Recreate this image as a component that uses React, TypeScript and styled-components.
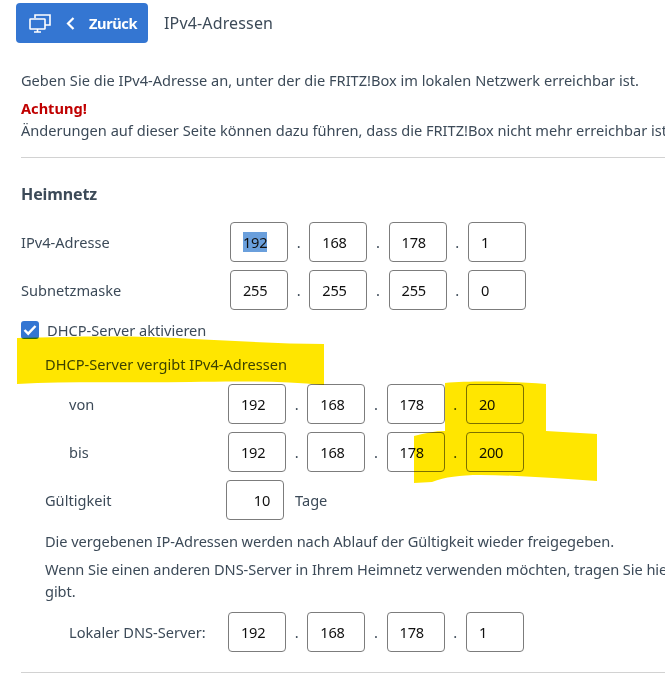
import React from "react";
import styled, { createGlobalStyle } from "styled-components";

const Global = createGlobalStyle`
  html, body { margin: 0; padding: 0; background: #fff; overflow: hidden; height: 688px; }
  body { font-family: "Noto Sans", "Liberation Sans", sans-serif; color: #3c4a58; }
`;

const Page = styled.div`
  position: relative;
  width: 665px;
  height: 688px;
  overflow: hidden;
  font-size: 14.6px;
`;
const Header = styled.header`
  display: flex;
  align-items: center;
  gap: 16px;
  padding: 3px 0 0 16px;
  height: 40px;
`;
const BackButton = styled.div`
  display: flex;
  align-items: center;
  width: 132px;
  height: 40px;
  box-sizing: border-box;
  padding-left: 13px;
  background: #3476d2;
  border-radius: 4px;
  color: #fff;
  font-weight: 700;
  font-size: 14.6px;
  letter-spacing: -0.4px;
`;
const BackLabel = styled.span`
  margin-left: 14px;
`;
const Chevron = styled.svg`
  margin-left: 15px;
`;
const Title = styled.div`
  font-size: 16px;
  letter-spacing: 0.15px;
`;
const Content = styled.main`
  width: 900px;
  padding: 26px 0 0 21px;
`;
const Para = styled.p<{ $top?: number; $tight?: boolean }>`
  margin: ${(p) => p.$top ?? 0}px 0 0;
  line-height: 22px;
  white-space: nowrap;
  letter-spacing: ${(p) => (p.$tight ? "-0.06px" : "0")};
`;
const Warning = styled.strong`
  display: block;
  color: #c00000;
  font-weight: 700;
`;
const Rule = styled.hr<{ $top: number }>`
  margin: ${(p) => p.$top}px 0 0;
  border: 0;
  border-top: 1px solid #d2d2d2;
  height: 1px;
`;
const SectionTitle = styled.h2`
  margin: 24px 0 17px;
  font-size: 16px;
  line-height: 22px;
  font-weight: 700;
  letter-spacing: -0.1px;
`;
const Row = styled.div<{ $indent?: number; $label: number; $top?: number }>`
  display: grid;
  grid-template-columns: ${(p) => p.$label}px auto;
  align-items: center;
  height: 40px;
  margin: ${(p) => p.$top ?? 8}px 0 0 ${(p) => p.$indent ?? 0}px;
`;
const Fields = styled.div`
  display: flex;
  align-items: center;
`;
const Octet = styled.div<{ $end?: boolean }>`
  width: 58px;
  height: 40px;
  box-sizing: border-box;
  display: flex;
  align-items: center;
  justify-content: ${(p) => (p.$end ? "flex-end" : "flex-start")};
  padding: 0 13px 0 12px;
  border: 1px solid #7c7c7c;
  border-radius: 4px;
  background: #fff;
  color: #111;
  font-size: 14.6px;
  letter-spacing: -0.25px;
`;
const Dot = styled.span`
  width: 21.3px;
  text-align: center;
  flex: none;
`;
const Selected = styled.span`
  background: #6a9fdc;
`;
const CheckRow = styled.label`
  display: flex;
  align-items: center;
  gap: 8px;
  height: 18px;
  margin-top: 11px;
`;
const CheckBox = styled.span`
  width: 18px;
  height: 18px;
  border-radius: 3px;
  background: #3476d2;
  display: flex;
  align-items: center;
  justify-content: center;
`;
const Indented = styled.div`
  padding-left: 24px;
`;
const SubTitle = styled.div`
  margin-top: 14px;
  line-height: 22px;
`;
const Unit = styled.span`
  margin-left: 11px;
`;
const Highlight = styled.svg`
  position: absolute;
  left: 0;
  top: 0;
  pointer-events: none;
  mix-blend-mode: multiply;
`;

const Address = ({ values, selected }: { values: string[]; selected?: boolean }) => (
  <Fields>
    {values.map((v, i) => (
      <React.Fragment key={i}>
        {i > 0 && <Dot>.</Dot>}
        <Octet>{selected && i === 0 ? <Selected>{v}</Selected> : v}</Octet>
      </React.Fragment>
    ))}
  </Fields>
);

export default function App() {
  return (
    <Page>
      <Global />
      <Header>
        <BackButton>
          <svg width="22" height="19" viewBox="0 0 22 19" fill="none" stroke="#fff" strokeWidth="1.6">
            <path d="M6 4V1h15v10h-5" />
            <rect x="1" y="5" width="15" height="10" rx="0.5" />
            <path d="M8.5 15v3M5 18h7" />
          </svg>
          <Chevron width="9" height="13" viewBox="0 0 9 13" fill="none" stroke="#fff" strokeWidth="2.2">
            <path d="M7.5 1 2 6.5 7.5 12" />
          </Chevron>
          <BackLabel>Zurück</BackLabel>
        </BackButton>
        <Title>IPv4-Adressen</Title>
      </Header>
      <Content>
        <Para>Geben Sie die IPv4-Adresse an, unter der die FRITZ!Box im lokalen Netzwerk erreichbar ist.</Para>
        <Para $top={6}>
          <Warning>Achtung!</Warning>
          Änderungen auf dieser Seite können dazu führen, dass die FRITZ!Box nicht mehr erreichbar ist
        </Para>
        <Rule $top={16} />
        <SectionTitle>Heimnetz</SectionTitle>
        <Row $label={209}>
          <span>IPv4-Adresse</span>
          <Address values={["192", "168", "178", "1"]} selected />
        </Row>
        <Row $label={209}>
          <span>Subnetzmaske</span>
          <Address values={["255", "255", "255", "0"]} />
        </Row>
        <CheckRow>
          <CheckBox>
            <svg width="14" height="12" viewBox="0 0 14 12" fill="none" stroke="#fff" strokeWidth="2.4">
              <path d="M1.5 6 5.2 9.7 12.5 2" />
            </svg>
          </CheckBox>
          DHCP-Server aktivieren
        </CheckRow>
        <Indented>
          <SubTitle>DHCP-Server vergibt IPv4-Adressen</SubTitle>
          <Row $indent={24} $label={159} $top={9}>
            <span>von</span>
            <Address values={["192", "168", "178", "20"]} />
          </Row>
          <Row $indent={24} $label={159}>
            <span>bis</span>
            <Address values={["192", "168", "178", "200"]} />
          </Row>
          <Row $label={181}>
            <span>Gültigkeit</span>
            <Fields>
              <Octet $end>10</Octet>
              <Unit>Tage</Unit>
            </Fields>
          </Row>
          <Para $top={10} $tight>
            Die vergebenen IP-Adressen werden nach Ablauf der Gültigkeit wieder freigegeben.
          </Para>
          <Para $top={6} $tight>
            Wenn Sie einen anderen DNS-Server in Ihrem Heimnetz verwenden möchten, tragen Sie hier
            <br />
            gibt.
          </Para>
          <Row $indent={24} $label={159} $top={10}>
            <span>Lokaler DNS-Server:</span>
            <Address values={["192", "168", "178", "1"]} />
          </Row>
        </Indented>
        <Rule $top={20} />
      </Content>
      <Highlight width="665" height="688" viewBox="0 0 665 688">
        <path
          fill="#ffe600"
          d="M17 338 C60 337 100 336 150 337 C210 339 270 344 324 344 L324 385 C280 381 240 381 190 382 C130 383 70 381 17 384 Z"
        />
        <path
          fill="#ffe600"
          d="M445 383 C470 381 510 381 546 384 L546 431 L597 434 L597 481 C560 479 520 475 480 475 C460 475 445 477 432 482 L414 483 L414 436 C425 433 435 431 445 431 Z"
        />
      </Highlight>
    </Page>
  );
}
